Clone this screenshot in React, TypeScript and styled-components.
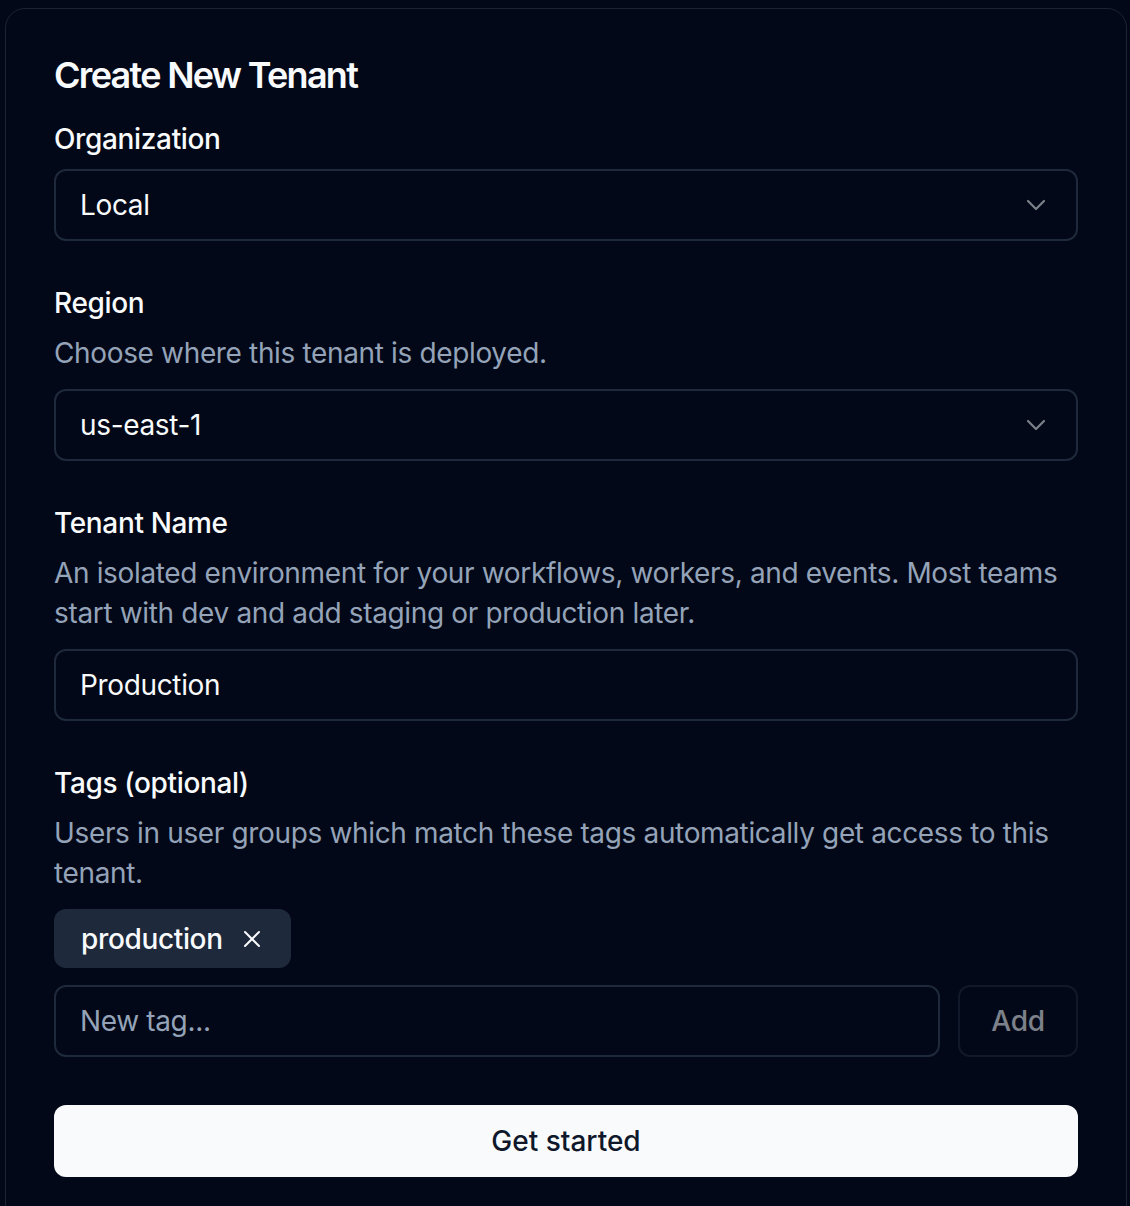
import React from "react";
import styled, { createGlobalStyle } from "styled-components";

const GlobalStyle = createGlobalStyle`
  html, body {
    margin: 0;
    padding: 0;
    background: #020817;
    font-family: Inter, "Noto Sans", "Liberation Sans", sans-serif;
    -webkit-font-smoothing: antialiased;
  }
  * { box-sizing: border-box; }
`;

const Page = styled.div`
  padding: 8px 3px 0 5px;
  min-height: 1206px;
  background: #020817;
`;

const Card = styled.div`
  border: 1px solid #1c2433;
  border-radius: 20px;
  background: #020817;
  padding: 48px 48px 48px;
  display: flex;
  flex-direction: column;
  letter-spacing: -0.35px;
`;

const Title = styled.h1`
  margin: 0 0 32px;
  font-size: 36px;
  line-height: 36px;
  font-weight: 600;
  letter-spacing: -1.7px;
  color: #f8fafc;
`;

const Form = styled.form`
  display: flex;
  flex-direction: column;
  gap: 48px;
`;

const Field = styled.div`
  display: flex;
  flex-direction: column;
  gap: 16px;
`;

const Label = styled.label`
  font-size: 28px;
  line-height: 28px;
  font-weight: 500;
  color: #f8fafc;
`;

const Description = styled.p`
  margin: 0;
  font-size: 28px;
  line-height: 40px;
  color: #94a3b8;
`;

const SelectBox = styled.div`
  height: 72px;
  border: 2px solid #1e293b;
  border-radius: 12px;
  padding: 0 24px 0 24px;
  display: flex;
  align-items: center;
  justify-content: space-between;
  font-size: 28px;
  color: #f8fafc;
`;

const Chevron = styled.svg`
  width: 32px;
  height: 32px;
  opacity: 0.5;
`;

const TextInput = styled.input<{ $grow?: boolean }>`
  height: 72px;
  ${(p) => (p.$grow ? "flex: 1;" : "width: 100%;")}
  min-width: 0;
  border: 2px solid #1e293b;
  border-radius: 12px;
  background: transparent;
  padding: 0 24px;
  font-family: inherit;
  font-size: 28px;
  letter-spacing: -0.35px;
  color: #f8fafc;
  outline: none;
  &::placeholder {
    color: #94a3b8;
  }
`;

const ChipList = styled.div`
  display: flex;
  flex-wrap: wrap;
  gap: 12px;
  margin-bottom: 1px;
`;

const Chip = styled.span`
  height: 59px;
  display: inline-flex;
  align-items: center;
  gap: 15px;
  padding: 0 25px 0 27px;
  border-radius: 12px;
  background: #1e293b;
  font-size: 28px;
  font-weight: 500;
  color: #f8fafc;
`;

const ChipX = styled.svg`
  width: 28px;
  height: 28px;
`;

const TagRow = styled.div`
  display: flex;
  gap: 18px;
`;

const AddButton = styled.button`
  width: 120px;
  height: 72px;
  border: 2px solid #1e293b;
  border-radius: 12px;
  background: transparent;
  font-family: inherit;
  font-size: 28px;
  font-weight: 500;
  letter-spacing: -0.3px;
  color: #f8fafc;
  opacity: 0.5;
`;

const PrimaryButton = styled.button`
  height: 72px;
  width: 100%;
  border: none;
  border-radius: 12px;
  background: #f8fafc;
  font-family: inherit;
  font-size: 28px;
  font-weight: 500;
  color: #0f172a;
`;

function ChevronDown() {
  return (
    <Chevron viewBox="0 0 24 24" fill="none" stroke="#f8fafc" strokeWidth={1.6} strokeLinecap="round" strokeLinejoin="round">
      <path d="m6 9 6 6 6-6" />
    </Chevron>
  );
}

export default function App() {
  return (
    <>
      <GlobalStyle />
      <Page>
        <Card>
          <Title>Create New Tenant</Title>
          <Form onSubmit={(e) => e.preventDefault()}>
            <Field>
              <Label>Organization</Label>
              <SelectBox>
                <span>Local</span>
                <ChevronDown />
              </SelectBox>
            </Field>
            <Field>
              <Label>Region</Label>
              <Description>Choose where this tenant is deployed.</Description>
              <SelectBox>
                <span>us-east-1</span>
                <ChevronDown />
              </SelectBox>
            </Field>
            <Field>
              <Label>Tenant Name</Label>
              <Description>
                An isolated environment for your workflows, workers, and events. Most teams start with dev and add staging or production later.
              </Description>
              <TextInput defaultValue="Production" />
            </Field>
            <Field>
              <Label>Tags (optional)</Label>
              <Description>Users in user groups which match these tags automatically get access to this tenant.</Description>
              <ChipList>
                <Chip>
                  production
                  <ChipX viewBox="0 0 24 24" fill="none" stroke="#f8fafc" strokeWidth={1.7} strokeLinecap="round" strokeLinejoin="round">
                    <path d="M18 6 6 18" />
                    <path d="m6 6 12 12" />
                  </ChipX>
                </Chip>
              </ChipList>
              <TagRow>
                <TextInput $grow placeholder="New tag..." />
                <AddButton type="button" disabled>Add</AddButton>
              </TagRow>
            </Field>
            <PrimaryButton type="submit">Get started</PrimaryButton>
          </Form>
        </Card>
      </Page>
    </>
  );
}
